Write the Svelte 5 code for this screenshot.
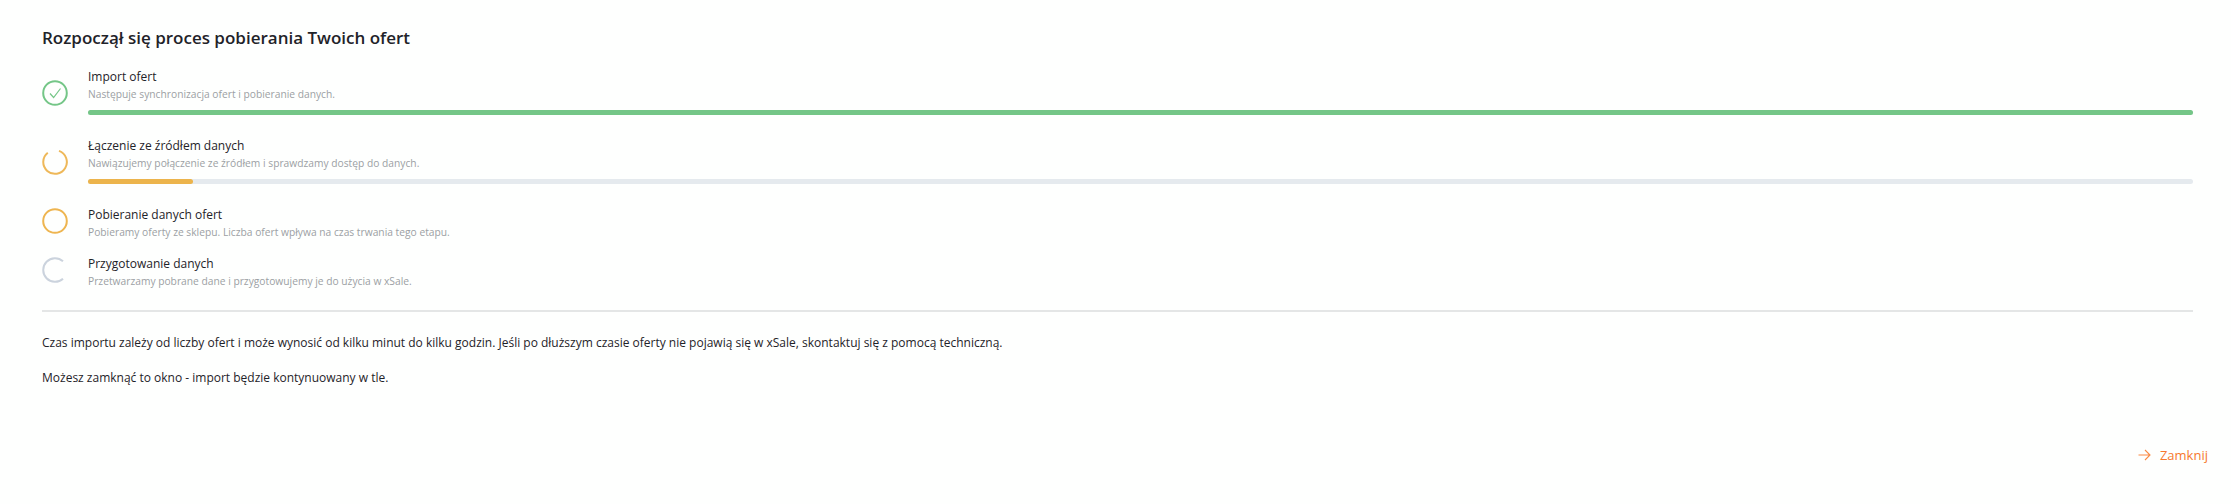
<script>
  const steps = [
    { title: 'Import ofert', desc: 'Następuje synchronizacja ofert i pobieranie danych.', state: 'done', progress: 100 },
    { title: 'Łączenie ze źródłem danych', desc: 'Nawiązujemy połączenie ze źródłem i sprawdzamy dostęp do danych.', state: 'active', progress: 5 },
    { title: 'Pobieranie danych ofert', desc: 'Pobieramy oferty ze sklepu. Liczba ofert wpływa na czas trwania tego etapu.', state: 'waiting' },
    { title: 'Przygotowanie danych', desc: 'Przetwarzamy pobrane dane i przygotowujemy je do użycia w xSale.', state: 'pending' },
  ]
</script>

<div class="page">
  <h1>Rozpoczął się proces pobierania Twoich ofert</h1>

  <div class="steps">
    {#each steps as step}
      <div class="step" class:has-bar={step.progress}>
        <svg class="icon" viewBox="0 0 26 26" width="26" height="26" fill="none" stroke-width="2">
          {#if step.state === 'done'}
            <circle cx="13" cy="13" r="11.8" stroke="#74c687" />
            <path d="M8 13.5l3.6 4L18.5 8.5" stroke="#74c687" stroke-width="1.2" />
          {:else if step.state === 'active'}
            <path d="M5.8 3.7A11.8 11.8 0 1 0 17 1.9" stroke="#eeb859" />
          {:else if step.state === 'waiting'}
            <circle cx="13" cy="13" r="11.8" stroke="#eeb550" />
          {:else}
            <path d="M21 4.3A11.8 11.8 0 1 0 21 21.7" stroke="#cbd3dd" />
          {/if}
        </svg>
        <div class="body">
          <div class="title">{step.title}</div>
          <div class="desc">{step.desc}</div>
          {#if step.progress}
            <div class="track">
              <div class="fill {step.state}" style="width: {step.progress}%"></div>
            </div>
          {/if}
        </div>
      </div>
    {/each}
  </div>

  <hr />

  <p>Czas importu zależy od liczby ofert i może wynosić od kilku minut do kilku godzin. Jeśli po dłuższym czasie oferty nie pojawią się w xSale, skontaktuj się z pomocą techniczną.</p>
  <p class="second">Możesz zamknąć to okno - import będzie kontynuowany w tle.</p>

  <div class="footer">
    <button>
      <svg viewBox="0 0 13 12" width="13" height="12" fill="none" stroke="#f98a45" stroke-width="1.1">
        <path d="M0.5 6h11.5M7 1l5 5-5 5" />
      </svg>
      Zamknij
    </button>
  </div>
</div>

<style>
  :global(body) {
    background: #fefffe;
    font-family: 'Open Sans', 'Noto Sans', sans-serif;
    color: #1f2329;
  }

  .page {
    height: 504px;
    box-sizing: border-box;
    padding: 26px 38px 0 42px;
    display: flex;
    flex-direction: column;
  }

  h1 {
    margin: 0 0 18px;
    font-size: 17px;
    line-height: 24px;
    font-weight: 600;
  }

  .step {
    display: flex;
    gap: 20px;
    align-items: flex-start;
    height: 49px;
  }

  .step.has-bar {
    height: 69px;
  }

  .icon {
    flex: none;
    margin-top: 2px;
  }

  .step.has-bar .icon {
    margin-top: 12px;
  }

  .body {
    flex: 1;
  }

  .title {
    font-size: 12px;
    line-height: 18px;
  }

  .desc {
    font-size: 10.25px;
    line-height: 17px;
    color: #9c9fa4;
  }

  .track {
    height: 5px;
    margin-top: 7px;
    border-radius: 3px;
    background: #e5eaee;
  }

  .fill {
    height: 100%;
    border-radius: 3px;
  }

  .fill.done {
    background: #74c687;
  }

  .fill.active {
    background: #ecb44c;
  }

  hr {
    margin: 6px 0 0;
    border: 0;
    border-top: 2px solid #e4e6e6;
  }

  p {
    margin: 21px 0 0;
    font-size: 12px;
    line-height: 20px;
  }

  p.second {
    margin-top: 15px;
  }

  .footer {
    margin-top: auto;
    margin-right: -15px;
    padding-bottom: 40px;
    display: flex;
    justify-content: flex-end;
  }

  button {
    display: flex;
    align-items: center;
    gap: 9px;
    padding: 0;
    border: 0;
    background: none;
    color: #f6782d;
    font: inherit;
    font-size: 13px;
    line-height: 18px;
  }
</style>
